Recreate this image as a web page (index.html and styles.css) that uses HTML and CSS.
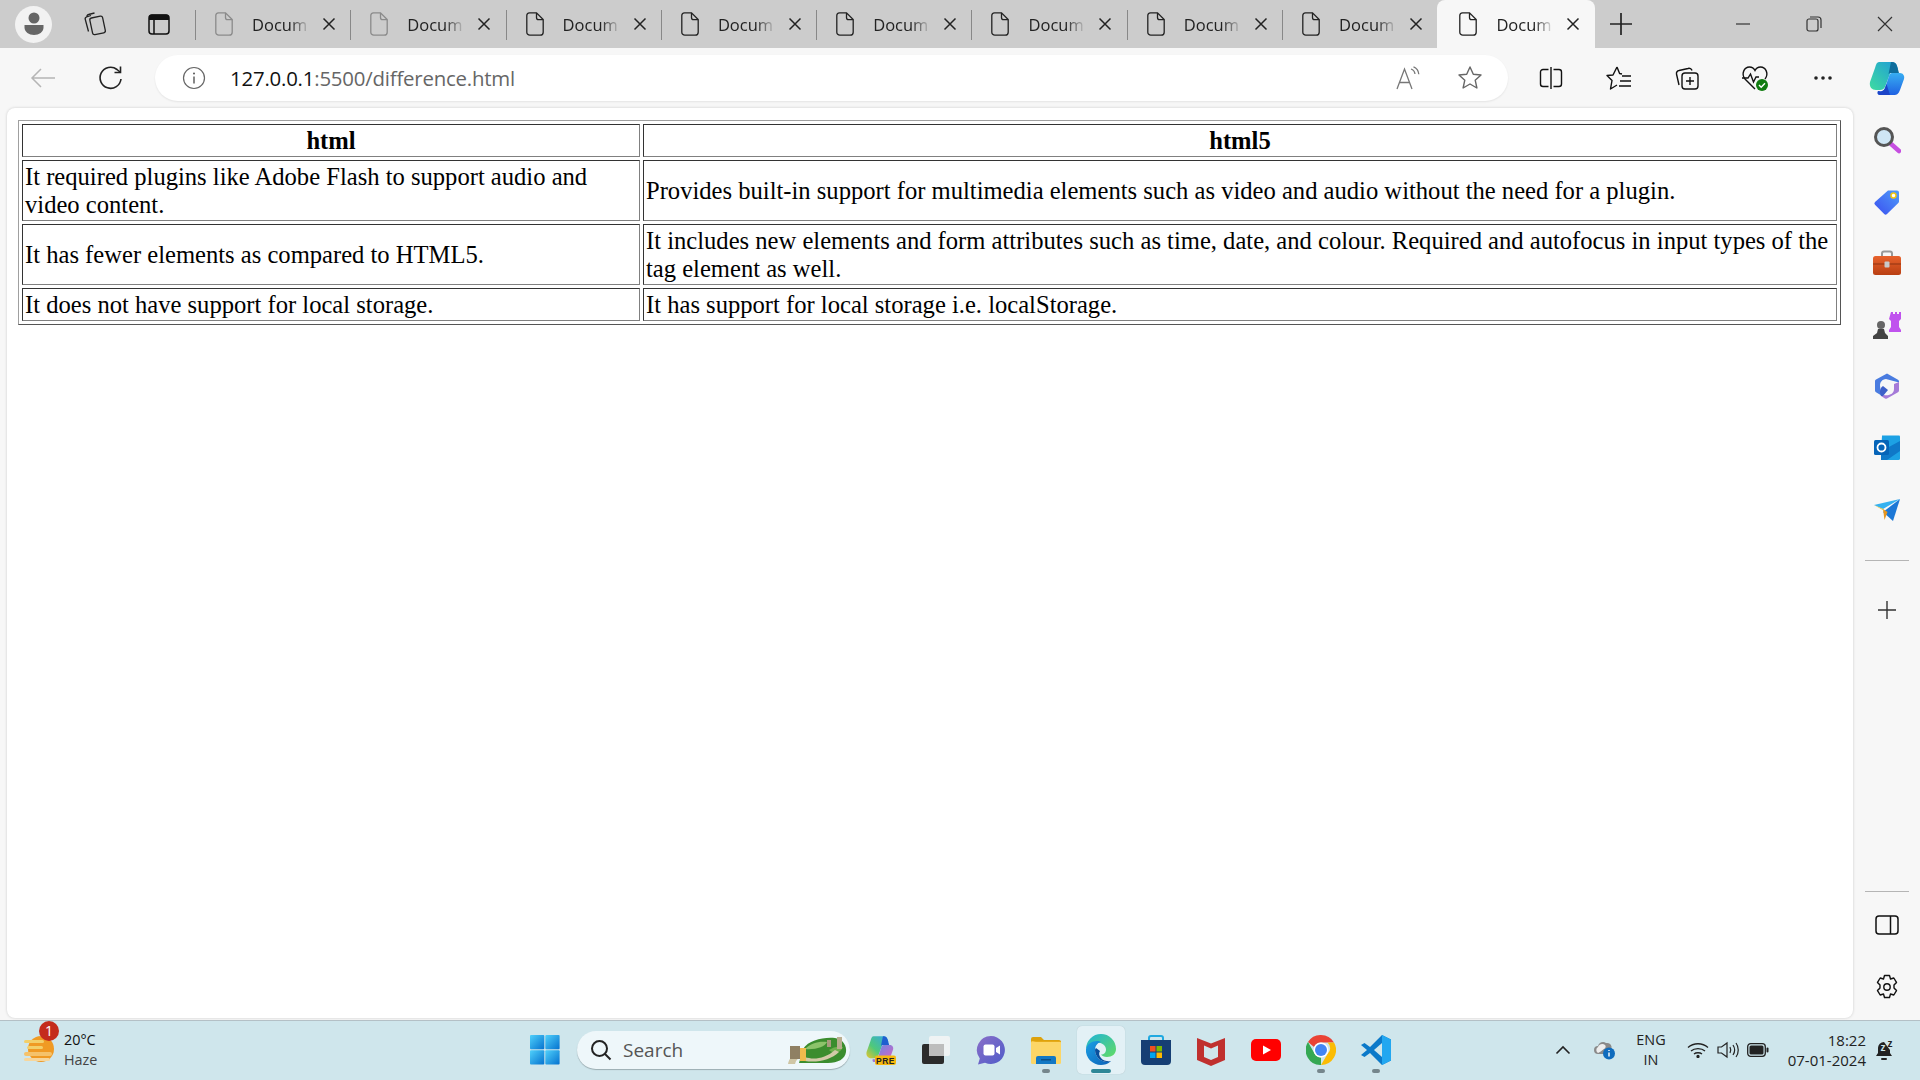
FILE: index.html

```html
<!DOCTYPE html>
<html>
<head>
    <meta charset="utf-8" />
    <title>Document</title>
    <link rel="stylesheet" href="styles.css">
</head>
<body>
<svg class="defs" width="0" height="0">
    <defs>
        <symbol id="doc" viewBox="0 0 18 24">
            <path d="M3.5 .8h7L17.2 7.6v12.6a3 3 0 0 1-3 3H3.8a3 3 0 0 1-3-3V3.6A2.8 2.8 0 0 1 3.5 .8zM10.5 .8v4.6a2.2 2.2 0 0 0 2.2 2.2h4.5" fill="none" stroke="currentColor" stroke-width="1.3"/>
        </symbol>
        <symbol id="close" viewBox="0 0 14 14">
            <path d="M1.5 1.5l11 11M12.5 1.5l-11 11" fill="none" stroke="currentColor" stroke-width="1.5"/>
        </symbol>
        <linearGradient id="copilotA" x1="0" y1="0" x2="0" y2="1">
            <stop offset="0" stop-color="#38aef2"/>
            <stop offset="1" stop-color="#1f62e2"/>
        </linearGradient>
        <linearGradient id="copilotB" x1="1" y1="0" x2="0" y2="1">
            <stop offset="0" stop-color="#1e9bd8"/>
            <stop offset="1" stop-color="#3fdca0"/>
        </linearGradient>
        <linearGradient id="winLogo" x1="0" y1="0" x2="1" y2="1">
            <stop offset="0" stop-color="#4fd0fb"/>
            <stop offset="1" stop-color="#0572cf"/>
        </linearGradient>
        <linearGradient id="tagGrad" x1="0" y1="1" x2="1" y2="0">
            <stop offset="0" stop-color="#3b4ff0"/>
            <stop offset="1" stop-color="#4f9cf9"/>
        </linearGradient>
        <linearGradient id="caseGrad" x1="0" y1="0" x2="0" y2="1">
            <stop offset="0" stop-color="#e8622c"/>
            <stop offset="1" stop-color="#b93f12"/>
        </linearGradient>
        <linearGradient id="edgeGrad" x1="0" y1="0" x2="1" y2="1">
            <stop offset="0" stop-color="#1fb3d8"/>
            <stop offset="1" stop-color="#62dc63"/>
        </linearGradient>
        <linearGradient id="edgeBlue" x1="0" y1="0" x2="1" y2="1">
            <stop offset="0" stop-color="#1c9fe4"/>
            <stop offset="1" stop-color="#0b62b8"/>
        </linearGradient>
        <linearGradient id="pilotPre" x1="0" y1="0" x2="1" y2="1">
            <stop offset="0" stop-color="#5a8fe8"/>
            <stop offset="1" stop-color="#e45fc0"/>
        </linearGradient>
        <linearGradient id="pilotLow" x1="1" y1="0" x2="0" y2="1">
            <stop offset="0" stop-color="#33a6e8"/>
            <stop offset=".6" stop-color="#4fc97a"/>
            <stop offset="1" stop-color="#e9c52b"/>
        </linearGradient>
        <linearGradient id="meetGrad" x1="0" y1="0" x2="1" y2="1">
            <stop offset="0" stop-color="#8a6ec8"/>
            <stop offset="1" stop-color="#4f5cc9"/>
        </linearGradient>
    </defs>
</svg>

<div class="window">
    <!-- Tab strip -->
    <div class="tab-strip">
        <div class="strip-left">
            <div class="profile">
                <svg width="20" height="24" viewBox="0 0 20 24"><circle cx="10" cy="6" r="5.5" fill="#666"/><path d="M.5 13h19v2.5c0 4.5-4.5 7.5-9.5 7.5S.5 20 .5 15.500z" fill="#666"/></svg>
            </div>
            <div class="strip-btn strip-btn-workspaces">
                <svg width="28" height="28" viewBox="0 0 28 28" fill="none" stroke="#222" stroke-width="1.3"><rect x="11" y="7" width="13" height="17" rx="2" transform="rotate(-12 17 15)"/><path d="M11 5.500L6.500 7a2 2 0 0 0-1.200 2.500l3.200 12M14.500 3l-6 1.500a2 2 0 0 0-1.500 2.500"/></svg>
            </div>
            <div class="strip-btn strip-btn-tabs">
                <svg width="24" height="24" viewBox="0 0 24 24"><rect x="2" y="3" width="20" height="19" rx="3" fill="none" stroke="#111" stroke-width="1.500"/><path d="M5 2.500h14a3 3 0 0 1 3 3V8H2V5.500a3 3 0 0 1 3-3z" fill="#111"/><path d="M7 8v14" stroke="#111" stroke-width="1.500"/></svg>
            </div>
        </div>
        <div class="tab tab-faded"><svg class="tab-doc"><use href="#doc"/></svg><span class="tab-title">Docum</span><svg class="tab-close"><use href="#close"/></svg></div>
        <div class="tab tab-faded"><svg class="tab-doc"><use href="#doc"/></svg><span class="tab-title">Docum</span><svg class="tab-close"><use href="#close"/></svg></div>
        <div class="tab"><svg class="tab-doc"><use href="#doc"/></svg><span class="tab-title">Docum</span><svg class="tab-close"><use href="#close"/></svg></div>
        <div class="tab"><svg class="tab-doc"><use href="#doc"/></svg><span class="tab-title">Docum</span><svg class="tab-close"><use href="#close"/></svg></div>
        <div class="tab"><svg class="tab-doc"><use href="#doc"/></svg><span class="tab-title">Docum</span><svg class="tab-close"><use href="#close"/></svg></div>
        <div class="tab"><svg class="tab-doc"><use href="#doc"/></svg><span class="tab-title">Docum</span><svg class="tab-close"><use href="#close"/></svg></div>
        <div class="tab"><svg class="tab-doc"><use href="#doc"/></svg><span class="tab-title">Docum</span><svg class="tab-close"><use href="#close"/></svg></div>
        <div class="tab"><svg class="tab-doc"><use href="#doc"/></svg><span class="tab-title">Docum</span><svg class="tab-close"><use href="#close"/></svg></div>
        <div class="tab tab-active"><svg class="tab-doc"><use href="#doc"/></svg><span class="tab-title">Docum</span><svg class="tab-close"><use href="#close"/></svg></div>
        <div class="new-tab">
            <svg width="24" height="24" viewBox="0 0 24 24"><path d="M12 1v22M1 12h22" stroke="#222" stroke-width="1.700"/></svg>
        </div>
        <div class="window-controls">
            <div class="win-btn"><svg width="16" height="16" viewBox="0 0 16 16"><path d="M1 8h14" stroke="#333" stroke-width="1.200"/></svg></div>
            <div class="win-btn"><svg width="16" height="16" viewBox="0 0 16 16" fill="none" stroke="#333" stroke-width="1.200"><rect x="1" y="3" width="11" height="12" rx="2"/><path d="M4 1h8a3 3 0 0 1 3 3v8"/></svg></div>
            <div class="win-btn"><svg width="16" height="16" viewBox="0 0 16 16"><path d="M1 1l14 14M15 1L1 15" stroke="#333" stroke-width="1.200"/></svg></div>
        </div>
    </div>

    <!-- Toolbar -->
    <div class="toolbar">
        <div class="nav-btn nav-back">
            <svg width="26" height="22" viewBox="0 0 26 22"><path d="M25 11H2M11 2l-9 9 9 9" fill="none" stroke="#b5b5b5" stroke-width="1.500"/></svg>
        </div>
        <div class="nav-btn nav-reload">
            <svg width="26" height="26" viewBox="0 0 26 26" fill="none" stroke="#222" stroke-width="1.600"><path d="M23 14a10.500 10.500 0 1 1-4-9.500L22 7"/><path d="M22.500 1.500V7.500H16.500"/></svg>
        </div>
        <div class="address-bar">
            <svg class="info-icon" width="24" height="24" viewBox="0 0 24 24"><circle cx="12" cy="12" r="10.500" fill="none" stroke="#666" stroke-width="1.200"/><path d="M12 10.500v7" stroke="#555" stroke-width="1.400"/><circle cx="12" cy="7.500" r="1" fill="#555"/></svg>
            <div class="url"><span class="url-host">127.0.0.1</span>:5500/difference.html</div>
            <div class="address-actions">
                <svg width="26" height="24" viewBox="0 0 26 24" fill="none" stroke="#777" stroke-width="1.300"><path d="M1 23L8.500 3l7.500 20M3.500 16.500h10"/><path d="M15 3c2.500.8 3.700 3 4 5M17.500 .8c3 1 5 4 5.300 7.500"/></svg>
                <svg width="26" height="26" viewBox="0 0 26 26"><path d="M13 2l3.300 7.200 7.700.8-5.800 5.200 1.700 7.800L13 19l-6.900 4 1.700-7.800L2 10l7.700-.8z" fill="none" stroke="#666" stroke-width="1.400" stroke-linejoin="round"/></svg>
            </div>
        </div>
        <div class="tool-icons">
            <div class="tool-btn"><svg width="24" height="24" viewBox="0 0 24 24" fill="none" stroke="#111" stroke-width="1.400"><path d="M9.500 3.500H4a2.500 2.500 0 0 0-2.500 2.500v12A2.500 2.500 0 0 0 4 20.500h5.500M14.500 3.500H20A2.500 2.500 0 0 1 22.500 6v12a2.500 2.500 0 0 1-2.500 2.500h-5.500M12 1v22"/></svg></div>
            <div class="tool-btn"><svg width="26" height="26" viewBox="0 0 26 26" fill="none" stroke="#111" stroke-width="1.400" stroke-linejoin="round"><path d="M11 2l2.600 6.500L16 9M7 10L1 10.500l5 5-1.500 8.500 6.500-4M1 10.500l6-.5L11 2"/><path d="M16 11h9M14 16h11M13 21h12"/></svg></div>
            <div class="tool-btn"><svg width="26" height="26" viewBox="0 0 26 26" fill="none" stroke="#111" stroke-width="1.400"><rect x="8" y="8" width="16" height="16" rx="3"/><path d="M16 12v8M12 16h8"/><path d="M5 20L2.500 9A3 3 0 0 1 5 5.500L14 3.500A3 3 0 0 1 18 5.500"/></svg></div>
            <div class="tool-btn"><svg width="28" height="28" viewBox="0 0 28 28"><path d="M14 25L4 15C0 10 3 3 8.500 3c2.500 0 4.500 1.500 5.500 3.500C15 4.500 17 3 19.500 3 25 3 28 10 24 15" fill="none" stroke="#111" stroke-width="1.400"/><path d="M1 14h6l2.500-4 3 8 2.500-5h3" fill="none" stroke="#111" stroke-width="1.400"/><circle cx="21" cy="21" r="6" fill="#107c10"/><path d="M18 21l2.200 2.200 3.800-4" fill="none" stroke="#fff" stroke-width="1.400"/></svg></div>
            <div class="tool-btn"><svg width="20" height="6" viewBox="0 0 20 6" fill="#222"><circle cx="3" cy="3" r="1.800"/><circle cx="10" cy="3" r="1.800"/><circle cx="17" cy="3" r="1.800"/></svg></div>
            <div class="tool-btn tool-copilot"><svg width="38" height="38" viewBox="0 0 38 38"><path d="M11 3h13c2.500 0 4 1 5 4l1 3c-5 0-7 2-8.500 6L17 28c-1 2-2.500 3-5 3H8c-4 0-7-3-6-8L7 9c1-4 2-6 4-6z" fill="url(#copilotB)"/><path d="M23 3h1c2.500 0 4 1 5 4l2 7h-8c-1 0-2 .5-2.500 1z" fill="#0f6d9c"/><path d="M24 14h8c3 0 5 3 4 6l-4 11c-1.500 4-3 5-6 5H13c-3 0-4-1-3-4 3 1 6 0 7-3l4-12c.5-2 1.500-3 3-3z" fill="url(#copilotA)"/><path d="M10 32c3 1 6 0 7-3l1.500-4L22 36h-9c-3 0-4-1-3-4z" fill="#1c44c8"/></svg></div>
        </div>
    </div>

    <!-- Page and sidebar -->
    <div class="middle">
        <div class="page-card">
            <table class="diff-table">
                <tr>
                    <th class="col-html">html</th>
                    <th>html5</th>
                </tr>
                <tr>
                    <td>It required plugins like Adobe Flash to support audio and video content.</td>
                    <td>Provides built-in support for multimedia elements such as video and audio without the need for a plugin.</td>
                </tr>
                <tr>
                    <td>It has fewer elements as compared to HTML5.</td>
                    <td>It includes new elements and form attributes such as time, date, and colour. Required and autofocus in input types of the tag element as well.</td>
                </tr>
                <tr>
                    <td>It does not have support for local storage.</td>
                    <td>It has support for local storage i.e. localStorage.</td>
                </tr>
            </table>
        </div>

        <div class="side-rail">
            <div class="rail-btn"><svg width="28" height="28" viewBox="0 0 28 28"><path d="M17 17l9 8" stroke="#c64fe0" stroke-width="4.500" stroke-linecap="round"/><circle cx="11" cy="11" r="8.500" fill="#cfe6f5" stroke="#555" stroke-width="3"/></svg></div>
            <div class="rail-btn"><svg width="28" height="28" viewBox="0 0 28 28"><path d="M15 2.500h9a2 2 0 0 1 2 2v9a2 2 0 0 1-.7 1.500L14 26a2 2 0 0 1-2.800 0L2 16.800a2 2 0 0 1 0-2.800z" fill="url(#tagGrad)"/><circle cx="20.500" cy="7.500" r="2.500" fill="#fff" stroke="#f2c811" stroke-width="1.500"/></svg></div>
            <div class="rail-btn"><svg width="30" height="26" viewBox="0 0 30 26"><path d="M10 6V3.500A2 2 0 0 1 12 1.500h6a2 2 0 0 1 2 2V6" fill="none" stroke="#999" stroke-width="2"/><rect x="1" y="6" width="28" height="19" rx="2.500" fill="url(#caseGrad)"/><path d="M1 14h28" stroke="#8f3210" stroke-width="1"/><rect x="12.500" y="11.500" width="5" height="6" rx="1" fill="#c9c9c9"/></svg></div>
            <div class="rail-btn"><svg width="30" height="30" viewBox="0 0 30 30"><path d="M18 2h2v2h2V2h2v2h2V2h2v7l-2 2v6l2 3v2H16v-2l2-3v-6l-2-2z" fill="#c053ee" transform="translate(1 0)"/><circle cx="9" cy="15" r="4" fill="#666"/><path d="M6 19h6l1 4 3 3v3H1v-3l4-3z" fill="#444"/></svg></div>
            <div class="rail-btn"><svg width="28" height="28" viewBox="0 0 28 28"><path d="M14 1.500L3 7.500a2 2 0 0 0-1 2v9a2 2 0 0 0 1 1.800l5 3-1-10c0-3 2-6 6-6.300l13 3.500v-1a2 2 0 0 0-1-1.800z" fill="#4a7ce0"/><path d="M26 10v8.500a2 2 0 0 1-1 1.800L14 26.500a2 2 0 0 1-2 0L8 24l3-1c5 1 10-1 10-6v-5z" fill="#a57ad8"/><path d="M8 24c-2-4-1-8 2-10l5 4-5 6z" fill="#3d5fc9"/></svg></div>
            <div class="rail-btn"><svg width="28" height="28" viewBox="0 0 28 28"><path d="M9 1.500h17a1 1 0 0 1 1 1v22a1.500 1.500 0 0 1-1.500 1.500H8v-6z" fill="#1da1e4"/><path d="M14 14l13-7v10l-13 9H8v-6z" fill="#0f78c8"/><rect x="1" y="6" width="15" height="15" rx="1.500" fill="#0664b8"/><circle cx="8.500" cy="13.500" r="4" fill="none" stroke="#fff" stroke-width="1.800"/></svg></div>
            <div class="rail-btn"><svg width="28" height="24" viewBox="0 0 28 24"><path d="M1 7L27 1 10 11z" fill="#35b1f0"/><path d="M27 1L20 23 10 14z" fill="#1c78d6"/><path d="M10 11l1.500 11 3-8z" fill="#e8961e"/><path d="M1 7l9 4 1.500 2z" fill="#f3c02f"/></svg></div>
            <div class="rail-sep rail-sep-top"></div>
            <div class="rail-btn"><svg width="20" height="20" viewBox="0 0 20 20"><path d="M10 1v18M1 10h18" stroke="#333" stroke-width="1.400"/></svg></div>
            <div class="rail-spacer"></div>
            <div class="rail-sep rail-sep-bottom"></div>
            <div class="rail-btn"><svg width="24" height="20" viewBox="0 0 24 20" fill="none" stroke="#111" stroke-width="1.500"><rect x="1" y="1" width="22" height="18" rx="3"/><path d="M15.500 1v18"/></svg></div>
            <div class="rail-btn"><svg width="26" height="26" viewBox="0 0 26 26" fill="none" stroke="#111" stroke-width="1.400" stroke-linejoin="round"><path d="M10.500 1.500h5l1 3.500 3.300-1 2.700 4.400-2.500 2.600 0 3 2.500 2.600-2.700 4.400-3.300-1-1 3.500h-5l-1-3.500-3.300 1-2.700-4.400 2.500-2.600 0-3-2.500-2.600 2.700-4.400 3.300 1z"/><circle cx="13" cy="13" r="3.200"/></svg></div>
        </div>
    </div>

    <!-- Taskbar -->
    <div class="taskbar">
        <div class="weather">
            <div class="weather-icon">
                <svg width="30" height="30" viewBox="0 0 30 30"><circle cx="17" cy="14" r="13" fill="#f09a24"/><rect x="0" y="5" width="20" height="3" rx="1.500" fill="#f3cf6a"/><rect x="3" y="11" width="16" height="3" rx="1.500" fill="#f3cf6a"/><rect x="0" y="17" width="28" height="4" rx="2" fill="#f5c26b"/><rect x="0" y="23" width="26" height="3" rx="1.500" fill="#f7d69c"/></svg>
                <span class="weather-badge">1</span>
            </div>
            <div class="weather-text">
                <div class="weather-temp">20°C</div>
                <div class="weather-cond">Haze</div>
            </div>
        </div>
        <div class="task-start">
            <svg width="30" height="30" viewBox="0 0 30 30" fill="url(#winLogo)"><rect x="0" y="0" width="14.300" height="14.300" rx="1"/><rect x="15.300" y="0" width="14.300" height="14.300" rx="1"/><rect x="0" y="15.300" width="14.300" height="14.300" rx="1"/><rect x="15.300" y="15.300" width="14.300" height="14.300" rx="1"/></svg>
        </div>
        <div class="task-search">
            <svg width="22" height="22" viewBox="0 0 22 22" fill="none" stroke="#222" stroke-width="2"><circle cx="9.500" cy="9.500" r="7.500"/><path d="M15 15l5.500 5.500"/></svg>
            <span class="search-label">Search</span>
            <svg class="search-art" width="62" height="30" viewBox="0 0 62 30"><path d="M18 14C24 5 38 2 50 3c8 1 12 8 11 14-1 7-8 11-18 11H14z" fill="#3b8d2e"/><path d="M20 14c6-6 14-8 22-7-2 5-12 8-22 7z" fill="#8cc36a"/><path d="M44 15c4-3 9-4 14-3-2 5-8 8-14 3z" fill="#6fb04e"/><path d="M3 29c1-6 5-9 10-11l3 4c-3 1-5 3-6 7z" fill="#cfc6a5"/><path d="M20 22c8 3 20 2 30-7l4 2c-8 8-22 11-34 9z" fill="#d3caa8"/><rect x="5" y="11" width="10" height="13" fill="#8f8063"/><rect x="15" y="13" width="6" height="13" fill="#efbb4d"/><rect x="42" y="5" width="4" height="7" fill="#a89c7e"/><rect x="52" y="2" width="5" height="12" fill="#b9ad8e"/></svg>
        </div>
        <div class="task-icons">
            <div class="task-btn">
                <svg width="32" height="32" viewBox="0 0 32 32"><g transform="scale(.78)"><path d="M11 3h13c2.500 0 4 1 5 4l1 3c-5 0-7 2-8.500 6L17 28c-1 2-2.500 3-5 3H8c-4 0-7-3-6-8L7 9c1-4 2-6 4-6z" fill="url(#pilotLow)"/><path d="M23 3h1c2.500 0 4 1 5 4l2 7h-8c-1 0-2 .5-2.500 1z" fill="#1f5fd0"/><path d="M24 14h8c3 0 5 3 4 6l-4 11c-1.500 4-3 5-6 5H13c-3 0-4-1-3-4 3 1 6 0 7-3l4-12c.5-2 1.500-3 3-3z" fill="url(#pilotPre)"/></g><rect x="10" y="21.500" width="21" height="9.500" rx="2" fill="#f7b90f"/><text x="20.500" y="29.500" class="pre-label" text-anchor="middle">PRE</text></svg>
            </div>
            <div class="task-btn">
                <svg width="30" height="30" viewBox="0 0 30 30"><rect x="1" y="9" width="22" height="20" rx="2" fill="#2b2b2b"/><rect x="8" y="1" width="21" height="20" rx="2" fill="#f6f6f6" fill-opacity=".8"/><rect x="8" y="9" width="15" height="12" fill="#bdbdbd"/></svg>
            </div>
            <div class="task-btn">
                <svg width="30" height="30" viewBox="0 0 30 30"><path d="M15 1a14 14 0 1 1-6 26.700L2 29.500l1.800-6A14 14 0 0 1 15 1z" fill="url(#meetGrad)"/><rect x="7.500" y="9.500" width="11" height="11" rx="2" fill="#fff"/><path d="M20 13l4-2.500v9L20 17z" fill="#fff"/></svg>
            </div>
            <div class="task-btn task-running">
                <svg width="30" height="28" viewBox="0 0 30 28"><path d="M0 3a2 2 0 0 1 2-2h8l3 3h15a2 2 0 0 1 2 2v4H0z" fill="#dda20d"/><rect x="0" y="5" width="30" height="23" rx="1.500" fill="#fcd667"/><path d="M5 5h25v1H0z" fill="#e6ab18"/><path d="M5 28v-6a2 2 0 0 1 2-2h16a2 2 0 0 1 2 2v6z" fill="#1278c4"/><rect x="10" y="23" width="10" height="1.500" fill="#0c4f85"/></svg>
            </div>
            <div class="task-btn task-active">
                <svg width="32" height="32" viewBox="0 0 32 32"><path d="M1 15A15 15 0 0 1 31 15c0 5-4 8-9 8-3 0-5-1-6-2.500 3 0 5-2 5-5 0-4-4-7-9-7-5 0-9 3-11 6.500z" fill="url(#edgeGrad)"/><path d="M1 15c1-5 6-8 11-8 2 0 3 .5 4 1-4 1-6 4-6 8 0 7 6 12 12 12 1 0 3-.5 4-1-3 3-7 4-10 4C8 31 0 24 1 15z" fill="url(#edgeBlue)"/><path d="M10 16c0 7 6 12 12 12 1 0 3-.5 4-1-3 .5-8 0-10-3-2-2-2.500-5-1-7l-4-3c-.6.600-1 1.200-1 2z" fill="#0a4f9c"/></svg>
            </div>
            <div class="task-btn">
                <svg width="30" height="30" viewBox="0 0 30 30"><path d="M8 7V3a2 2 0 0 1 2-2h10a2 2 0 0 1 2 2v4" fill="none" stroke="#20a9e0" stroke-width="2"/><path d="M0 5h30v21a4 4 0 0 1-4 4H4a4 4 0 0 1-4-4z" fill="#163f74"/><rect x="9" y="11" width="5.500" height="5.500" fill="#f25022"/><rect x="15.500" y="11" width="5.500" height="5.500" fill="#7fba00"/><rect x="9" y="17.500" width="5.500" height="5.500" fill="#00a4ef"/><rect x="15.500" y="17.500" width="5.500" height="5.500" fill="#ffb900"/></svg>
            </div>
            <div class="task-btn">
                <svg width="28" height="32" viewBox="0 0 28 32"><path fill-rule="evenodd" d="M0 4l14 5.500L28 4l0 22L14 32 0 26zM7 11.500v11.500l7 3 7-3V11.500l-7 3z" fill="#c0302e"/></svg>
            </div>
            <div class="task-btn">
                <svg width="30" height="22" viewBox="0 0 30 22"><rect x="0" y="0" width="30" height="22" rx="5" fill="#f00"/><path d="M12 6.500l8 4.500-8 4.500z" fill="#fff"/></svg>
            </div>
            <div class="task-btn task-running">
                <svg width="30" height="30" viewBox="0 0 30 30"><path d="M15 0a15 15 0 0 1 13 7.500H15a7.500 7.500 0 0 0-7 4.500L2 7a15 15 0 0 1 13-7z" fill="#ea4335"/><path d="M28 7.500A15 15 0 0 1 15 30l6.500-11a7.500 7.500 0 0 0 0-11.500z" fill="#fbbc04"/><path d="M15 30A15 15 0 0 1 2 7l6.500 11.500a7.500 7.500 0 0 0 6.500 4z" fill="#34a853"/><circle cx="15" cy="15" r="7.500" fill="#fff"/><circle cx="15" cy="15" r="6" fill="#4285f4"/></svg>
            </div>
            <div class="task-btn task-running">
                <svg width="30" height="30" viewBox="0 0 30 30"><path d="M21 0l9 4.500v21L21 30 9 18l-5.500 4L0 20l6-5-6-5 3.500-2L9 12z" fill="#0b79c9"/><path d="M21 0l9 4.500v21L21 30z" fill="#22a7f0"/><path d="M21 8l-8 7 8 7z" fill="#cfe6ec"/></svg>
            </div>
        </div>
        <div class="tray">
            <div class="tray-btn tray-caret"><svg width="16" height="10" viewBox="0 0 16 10"><path d="M1.500 8.500L8 2l6.500 6.500" fill="none" stroke="#222" stroke-width="1.600"/></svg></div>
            <div class="tray-btn tray-cloud"><svg width="22" height="20" viewBox="0 0 22 20"><path d="M4 14a4 4 0 0 1 0-8c1-3.500 5-5 8-3 3-.5 5 1 5.500 3.500V14z" fill="#8a8a8a"/><path d="M4 13a3.500 3.500 0 0 1 0-6c1-3 5-4 7-2 1 1 1 3-1 4-2 1-3 3-6 4z" fill="#eee"/><circle cx="15" cy="13.500" r="6" fill="#0f6cbd"/><path d="M15 12.500v4M15 10v1" stroke="#fff" stroke-width="1.400"/></svg></div>
            <div class="tray-lang"><div>ENG</div><div>IN</div></div>
            <div class="tray-btn tray-sys tray-wifi"><svg width="22" height="16" viewBox="0 0 22 16" fill="none" stroke="#222" stroke-width="1.300"><path d="M1 5.500c5.500-5 14.500-5 20 0M4 9c3.500-3.200 10.500-3.200 14 0M7 12c2-1.700 6-1.700 8 0"/><circle cx="11" cy="14.500" r="1" fill="#222"/></svg></div>
            <div class="tray-btn tray-sys"><svg width="22" height="18" viewBox="0 0 22 18" fill="none" stroke="#222" stroke-width="1.200"><path d="M1 6h3.500L10 2v14l-5.500-4H1z"/><path d="M13 6c1 2 1 4 0 6M16 4c2 3 2 7 0 10M19 2c3 4 3 10 0 14"/></svg></div>
            <div class="tray-btn tray-sys"><svg width="22" height="14" viewBox="0 0 22 14"><rect x=".7" y=".7" width="17.600" height="12.600" rx="3" fill="none" stroke="#222" stroke-width="1.300"/><rect x="2.500" y="2.500" width="14" height="9" rx="1.500" fill="#222"/><rect x="19.500" y="4.500" width="2" height="5" rx="1" fill="#222"/></svg></div>
            <div class="tray-clock"><div>18:22</div><div>07-01-2024</div></div>
            <div class="tray-btn tray-bell"><svg width="18" height="22" viewBox="0 0 18 22"><path d="M8 3a6 6 0 0 0-6 6v5l-2 3h16l-2-3v-3" fill="#222"/><rect x="5" y="19" width="6" height="2" rx="1" fill="#222"/><text x="7" y="12" class="zz-label zz-small" text-anchor="middle">z</text><text x="14" y="8" class="zz-label" text-anchor="middle">z</text></svg></div>
        </div>
    </div>
</div>
</body>
</html>
```

FILE: styles.css

```css
/* ============ Edge window on Windows 11 ============ */
* {
  box-sizing: border-box;
}
html, body {
  margin: 0;
  padding: 0;
  height: 100%;
  overflow: hidden;
}
body {
  font-family: "Open Sans", "Noto Sans", sans-serif;
  background-color: #f7f7f7;
  color: #111;
}
.defs {
  display: block;
  width: 0;
  height: 0;
}
svg {
  display: block;
  flex: none;
}
.window {
  display: flex;
  flex-direction: column;
  height: 1080px;
}

/* ---- tab strip ---- */
.tab-strip {
  height: 48px;
  flex: none;
  display: flex;
  background-color: #cccccc;
}
.strip-left {
  width: 195px;
  flex: none;
  display: flex;
  align-items: center;
  padding-left: 15px;
}
.profile {
  width: 37px;
  height: 37px;
  border-radius: 50%;
  background-color: #f2f2f2;
  display: flex;
  align-items: center;
  justify-content: center;
}
.strip-btn-workspaces {
  margin-left: 28px;
}
.strip-btn-tabs {
  margin-left: 39px;
}
.tab {
  width: 155.3px;
  flex: none;
  height: 48px;
  display: flex;
  align-items: center;
  padding-left: 20px;
  position: relative;
}
.tab:not(.tab-active):before {
  content: "";
  position: absolute;
  left: 0;
  top: 10px;
  height: 30px;
  width: 1px;
  background-color: #888;
}
.tab-doc {
  width: 18px;
  height: 24px;
  color: #222;
}
.tab-faded .tab-doc {
  color: #8a8a8a;
}
.tab-title {
  margin-left: 19px;
  width: 58px;
  font-size: 16.5px;
  white-space: nowrap;
  color: #222;
  -webkit-mask-image: linear-gradient(to right, #000 65%, transparent 100%);
  mask-image: linear-gradient(to right, #000 65%, transparent 100%);
}
.tab-close {
  width: 14px;
  height: 14px;
  margin-left: 12px;
  color: #222;
}
.tab-active {
  background-color: #f7f7f7;
  border-radius: 8px 8px 0 0;
  padding-left: 22px;
  width: 158px;
}
.new-tab {
  margin-left: 14px;
  width: 24px;
  display: flex;
  align-items: center;
}
.window-controls {
  margin-left: auto;
  display: flex;
  align-items: center;
}
.win-btn {
  width: 71px;
  height: 48px;
  display: flex;
  align-items: center;
  justify-content: center;
}

/* ---- toolbar ---- */
.toolbar {
  height: 60px;
  flex: none;
  display: flex;
  align-items: center;
  padding-bottom: 1px;
  background-color: #f7f7f7;
}
.nav-btn {
  display: flex;
  align-items: center;
  justify-content: center;
  height: 46px;
}
.nav-back {
  width: 26px;
  margin-left: 30px;
}
.nav-reload {
  width: 26px;
  margin-left: 42px;
}
.address-bar {
  width: 1353px;
  flex: none;
  height: 46px;
  margin-left: 31px;
  display: flex;
  align-items: center;
  background-color: #fff;
  border-radius: 23px;
  box-shadow: 0 1px 2px rgba(0, 0, 0, .08);
  padding-left: 27px;
}
.url {
  margin-left: 24px;
  font-size: 20.4px;
  letter-spacing: -0.2px;
  color: #666;
  white-space: nowrap;
}
.url-host {
  color: #111;
}
.address-actions {
  margin-left: auto;
  display: flex;
  align-items: center;
  gap: 35px;
  padding-right: 25px;
}
.tool-icons {
  display: flex;
  align-items: center;
  margin-left: 9px;
}
.tool-btn {
  width: 68px;
  flex: none;
  display: flex;
  align-items: center;
  justify-content: center;
}
.tool-copilot {
  width: 60px;
}

/* ---- page ---- */
.middle {
  flex: 1;
  display: flex;
  min-height: 0;
  padding-left: 7px;
}
.page-card {
  width: 1846px;
  height: 910px;
  flex: none;
  background-color: #fff;
  border-radius: 8px;
  box-shadow: 0 0 3px rgba(0, 0, 0, .18);
  padding: 12px 11px;
  font-family: "Liberation Serif", "Times New Roman", serif;
  font-size: 24.6px;
  color: #000;
}
.diff-table {
  width: 1823px;
  table-layout: fixed;
  border-collapse: separate;
  border-spacing: 3px;
  border: 1px solid;
  border-color: #a0a0a0 #555 #555 #a0a0a0;
  line-height: 27.4px;
}
.diff-table th, .diff-table td {
  border: 1px solid;
  border-color: #333 #808080 #808080 #333;
  padding: 2px;
}
.diff-table th {
  font-weight: bold;
  text-align: center;
}
.col-html {
  width: 618px;
}

/* ---- right rail ---- */
.side-rail {
  flex: 1;
  display: flex;
  flex-direction: column;
  align-items: center;
  padding-top: 8px;
  padding-bottom: 9px;
}
.rail-btn {
  height: 48px;
  flex: none;
  margin-bottom: 13.6px;
  display: flex;
  align-items: center;
  justify-content: center;
}
.rail-sep {
  width: 44px;
  height: 1px;
  flex: none;
  background-color: #b5b5b5;
}
.rail-sep-top {
  margin-top: 13px;
  margin-bottom: 25px;
}
.rail-sep-bottom {
  margin-bottom: 9px;
}
.rail-spacer {
  flex: 1;
}
.rail-btn:last-child {
  margin-bottom: 0;
}

/* ---- taskbar ---- */
.taskbar {
  height: 60px;
  flex: none;
  display: flex;
  align-items: center;
  background-color: #cfe6ec;
  border-top: 1px solid #b4c0c6;
  padding-bottom: 2px;
}
.weather {
  width: 530px;
  flex: none;
  display: flex;
  align-items: center;
  padding-left: 24px;
}
.weather-icon {
  position: relative;
  width: 30px;
  height: 30px;
}
.weather-badge {
  position: absolute;
  top: -14px;
  left: 15px;
  width: 20px;
  height: 20px;
  border-radius: 50%;
  background-color: #c42b1c;
  color: #fff;
  font-size: 14px;
  line-height: 20px;
  text-align: center;
}
.weather-text {
  margin-left: 10px;
  font-size: 14.4px;
  line-height: 20px;
}
.weather-temp {
  color: #111;
}
.weather-cond {
  color: #444;
}
.task-start {
  width: 47px;
  flex: none;
}
.task-search {
  width: 273px;
  height: 38px;
  flex: none;
  display: flex;
  align-items: center;
  padding-left: 13px;
  border-radius: 19px;
  background-color: #eef7fa;
  box-shadow: 0 1px 1px rgba(0, 0, 0, .25);
}
.search-label {
  margin-left: 11px;
  font-size: 19px;
  color: #555;
}
.search-art {
  margin-left: auto;
  margin-right: 3px;
}
.task-icons {
  display: flex;
  align-items: center;
  margin-left: 3px;
}
.task-btn {
  width: 55px;
  height: 48px;
  flex: none;
  display: flex;
  align-items: center;
  justify-content: center;
  position: relative;
}
.task-running:after, .task-active:after {
  content: "";
  position: absolute;
  bottom: 1px;
  left: 50%;
  width: 8px;
  height: 4px;
  margin-left: -4px;
  border-radius: 2px;
  background-color: #75868c;
}
.task-active {
  width: 48px;
  margin: 0 3.5px;
  border-radius: 5px;
  background-color: #e3f1f6;
  box-shadow: 0 0 1px rgba(0, 0, 0, .2);
}
.task-active:after {
  width: 20px;
  margin-left: -10px;
  background-color: #2e8797;
}
.pre-label {
  font-family: "Liberation Sans", sans-serif;
  font-size: 8.5px;
  font-weight: bold;
  letter-spacing: .5px;
  fill: #222;
}
.tray {
  display: flex;
  align-items: center;
  font-size: 14.4px;
  color: #222;
  margin-left: 151.5px;
}
.tray-btn {
  display: flex;
  align-items: center;
  justify-content: center;
  flex: none;
}
.tray-caret {
  width: 16px;
}
.tray-cloud {
  width: 22px;
  margin-left: 23px;
}
.tray-lang {
  width: 50px;
  margin-left: 10.5px;
  text-align: center;
  line-height: 20px;
}
.tray-sys {
  width: 30px;
}
.tray-wifi {
  margin-left: 7px;
}
.tray-clock {
  width: 93px;
  font-size: 15px;
  text-align: right;
  line-height: 20px;
}
.tray-bell {
  width: 18px;
  margin-left: 10px;
}
.zz-label {
  font-family: "Liberation Sans", sans-serif;
  font-size: 10px;
  font-weight: bold;
  fill: #222;
}
.zz-small {
  fill: #cfe6ec;
}
```
